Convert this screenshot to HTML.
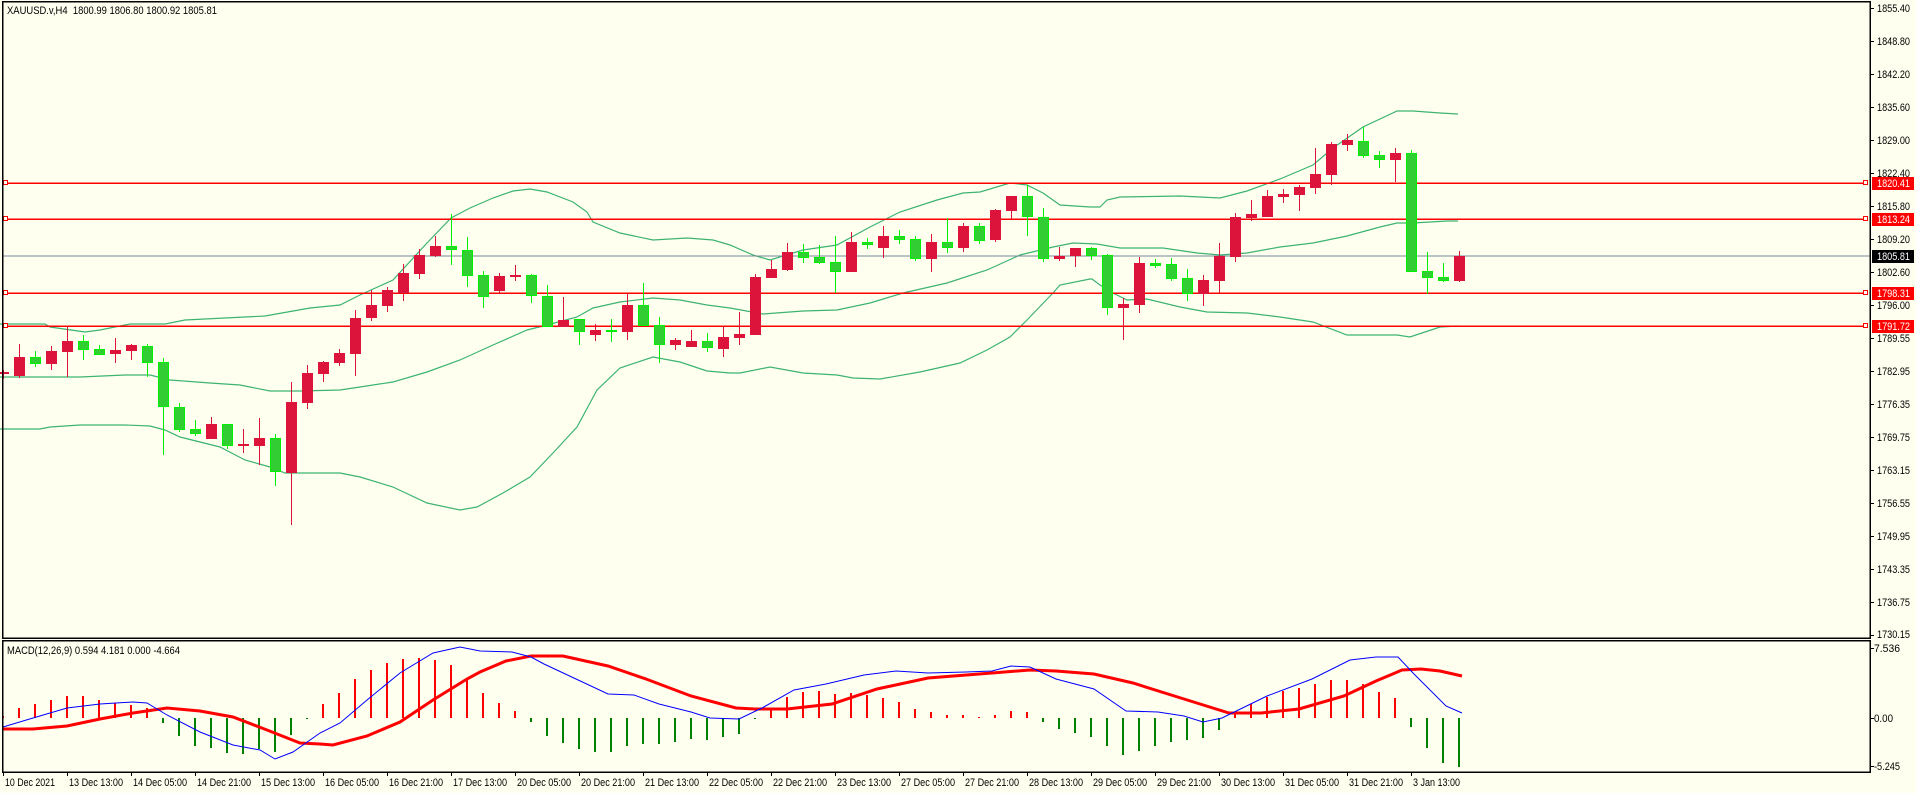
<!DOCTYPE html>
<html><head><meta charset="utf-8">
<style>
html,body{margin:0;padding:0;background:#fffff0;width:1916px;height:793px;overflow:hidden}
svg{display:block}
text{font-family:"Liberation Sans",sans-serif;font-size:11px;fill:#000}
</style></head>
<body>
<svg id="s" width="1916" height="793" viewBox="0 0 1916 793" xmlns="http://www.w3.org/2000/svg" shape-rendering="crispEdges">
<rect x="0" y="0" width="1916" height="793" fill="#fffff0"/>
<g id="bands" fill="none" stroke="#3cb371" stroke-width="1.2" shape-rendering="auto"></g>
<g id="hl"></g>
<g id="candles"></g>
<g id="macd"></g>
<rect x="2.5" y="1.5" width="1867.5" height="636.5" fill="none" stroke="#000" stroke-width="1.5"/>
<rect x="2.5" y="640.5" width="1867.5" height="131.5" fill="none" stroke="#000" stroke-width="1.5"/>
<g id="ticks" stroke="#000"></g>
<text x="7" y="14" textLength="210" lengthAdjust="spacingAndGlyphs">XAUUSD.v,H4&#160;&#160;1800.99 1806.80 1800.92 1805.81</text>
<text x="7" y="654" textLength="173" lengthAdjust="spacingAndGlyphs">MACD(12,26,9) 0.594 4.181 0.000 -4.664</text>
<g id="plabels" class="pl">
<text x="1877" y="12">1855.40</text>
<text x="1877" y="45">1848.80</text>
<text x="1877" y="78">1842.20</text>
<text x="1877" y="111">1835.60</text>
<text x="1877" y="144">1829.00</text>
<text x="1877" y="177">1822.40</text>
<text x="1877" y="210">1815.80</text>
<text x="1877" y="243">1809.20</text>
<text x="1877" y="276">1802.60</text>
<text x="1877" y="309">1796.00</text>
<text x="1877" y="342">1789.55</text>
<text x="1877" y="375">1782.95</text>
<text x="1877" y="408">1776.35</text>
<text x="1877" y="441">1769.75</text>
<text x="1877" y="474">1763.15</text>
<text x="1877" y="507">1756.55</text>
<text x="1877" y="540">1749.95</text>
<text x="1877" y="573">1743.35</text>
<text x="1877" y="606">1736.75</text>
<text x="1877" y="638">1730.15</text>
</g>
<g id="boxes">
<rect x="1872" y="177" width="42" height="13" fill="#ff0000"/>
<text x="1877" y="187" style="fill:#fff">1820.41</text>
<rect x="1872" y="213" width="42" height="13" fill="#ff0000"/>
<text x="1877" y="223" style="fill:#fff">1813.24</text>
<rect x="1872" y="250" width="42" height="13" fill="#000"/>
<text x="1877" y="260" style="fill:#fff">1805.81</text>
<rect x="1872" y="287" width="42" height="13" fill="#ff0000"/>
<text x="1877" y="297" style="fill:#fff">1798.31</text>
<rect x="1872" y="320" width="42" height="13" fill="#ff0000"/>
<text x="1877" y="330" style="fill:#fff">1791.72</text>
</g>
<text x="1874" y="652" textLength="26" lengthAdjust="spacingAndGlyphs">7.536</text>
<text x="1874" y="722" textLength="19" lengthAdjust="spacingAndGlyphs">0.00</text>
<text x="1874" y="770" textLength="26" lengthAdjust="spacingAndGlyphs">-5.245</text>
<g id="tlabels">
<text x="5" y="786">10 Dec 2021</text>
<text x="69" y="786">13 Dec 13:00</text>
<text x="133" y="786">14 Dec 05:00</text>
<text x="197" y="786">14 Dec 21:00</text>
<text x="261" y="786">15 Dec 13:00</text>
<text x="325" y="786">16 Dec 05:00</text>
<text x="389" y="786">16 Dec 21:00</text>
<text x="453" y="786">17 Dec 13:00</text>
<text x="517" y="786">20 Dec 05:00</text>
<text x="581" y="786">20 Dec 21:00</text>
<text x="645" y="786">21 Dec 13:00</text>
<text x="709" y="786">22 Dec 05:00</text>
<text x="773" y="786">22 Dec 21:00</text>
<text x="837" y="786">23 Dec 13:00</text>
<text x="901" y="786">27 Dec 05:00</text>
<text x="965" y="786">27 Dec 21:00</text>
<text x="1029" y="786">28 Dec 13:00</text>
<text x="1093" y="786">29 Dec 05:00</text>
<text x="1157" y="786">29 Dec 21:00</text>
<text x="1221" y="786">30 Dec 13:00</text>
<text x="1285" y="786">31 Dec 05:00</text>
<text x="1349" y="786">31 Dec 21:00</text>
<text x="1413" y="786">3 Jan 13:00</text>
</g>
</svg>
<script>
var NS="http://www.w3.org/2000/svg";
function el(p,t,a){var e=document.createElementNS(NS,t);for(var k in a)e.setAttribute(k,a[k]);p.appendChild(e);return e;}
function fit(sel,fn){document.querySelectorAll(sel).forEach(function(t){t.setAttribute('textLength',fn(t));t.setAttribute('lengthAdjust','spacingAndGlyphs');});}
fit('#plabels text',function(){return 33;});
fit('#boxes text',function(){return 33;});
fit('#tlabels text',function(t){var s=t.textContent;if(s=='10 Dec 2021')return 50;if(s.length<12)return 47;return 54;});
var C=[[1,372,374,370,379],[1,357,376,344,378],[0,357,364,351,367],[1,351,364,346,370],[1,341,352,327,377],[0,341,350,335,360],[0,349,355,345,355],[1,350,354,338,363],[1,345,351,344,360],[0,346,363,344,377],
[0,362,407,358,455],[0,407,430,403,432],[0,429,434,420,436],[1,424,439,417,439],[0,424,446,424,449],[1,444,446,429,453],[1,438,446,418,465],[0,438,472,434,486],[1,402,473,382,525],[1,373,403,365,409],
[1,362,374,361,382],[1,353,363,349,366],[1,318,354,310,376],[1,305,318,290,321],[1,290,306,287,312],[1,273,293,264,301],[1,255,274,249,279],[1,246,256,236,257],[0,246,250,214,265],[0,250,276,237,287],
[0,275,297,271,308],[1,276,291,273,294],[1,275,277,265,281],[0,275,296,274,303],[0,296,327,285,327],[1,320,327,297,327],[0,319,332,319,345],[1,330,335,324,341],[0,330,332,319,342],[1,305,332,294,340],
[0,305,326,283,326],[0,325,345,317,363],[1,340,345,338,350],[1,341,347,330,347],[0,341,348,333,352],[1,337,349,327,357],[1,334,338,312,345],[1,277,335,274,335],[1,269,278,260,278],[1,252,270,243,271],
[0,252,258,244,263],[0,257,263,245,264],[0,262,272,236,293],[1,242,272,232,272],[0,242,245,238,249],[1,236,248,226,258],[0,236,240,230,244],[0,239,259,236,261],[1,242,259,234,272],[0,242,248,218,253],
[1,226,248,223,252],[0,226,241,223,244],[1,210,240,209,242],[1,196,211,196,219],[0,196,217,185,236],[0,217,259,208,262],[1,256,259,247,261],[1,248,256,248,267],[0,248,256,247,260],[0,255,308,254,315],
[1,304,308,298,340],[1,263,305,257,313],[0,263,266,259,268],[0,264,279,258,281],[0,278,294,269,301],[1,280,294,275,306],[1,256,281,243,293],[1,217,257,213,262],[1,214,218,200,221],[1,196,217,190,217],
[1,194,197,189,203],[1,187,195,185,211],[1,174,188,148,194],[1,144,175,142,185],[1,140,145,134,151],[0,141,156,127,158],[0,155,160,151,168],[1,153,160,148,182],[0,153,272,150,272],[0,271,278,252,294],
[0,277,281,263,282],[1,256,281,251,282]];
var g=document.getElementById('candles');
C.forEach(function(c,k){var cx=16*k+3;var red=c[0];
 el(g,'rect',{x:cx,y:c[3],width:1,height:Math.max(1,c[4]-c[3]),fill:red?'#dc143c':'#00ee00'});
 var h=Math.max(1,c[2]-c[1]);
 if(red) el(g,'rect',{x:cx-5,y:c[1],width:11,height:h,fill:'#dc143c'});
 else {el(g,'rect',{x:cx-5,y:c[1],width:11,height:h,fill:'#00ee00'});if(h>2)el(g,'rect',{x:cx-4,y:c[1]+1,width:9,height:h-2,fill:'#32cd32'});}
});
var UP=[[0,324],[45,324],[50,327],[85,332],[100,330],[130,324],[165,324],[185,320],[225,318],[265,316],[310,308],[340,305],[360,295],[393,280],[427,243],[451,218],[470,208],[493,198],[513,191],[530,189],[547,192],[573,202],[587,212],[593,222],[620,233],[653,240],[687,238],[713,240],[730,245],[753,255],[770,260],[803,250],[837,245],[870,227],[900,212],[937,200],[963,193],[980,192],[1010,183],[1027,185],[1043,193],[1060,205],[1090,207],[1100,207],[1107,200],[1120,197],[1180,196],[1200,197],[1220,198],[1247,191],[1280,179],[1313,165],[1333,148],[1363,127],[1397,111],[1413,111],[1440,113],[1458,114]];
var MID=[[0,377],[80,377],[125,375],[150,375],[170,380],[210,383],[240,385],[270,391],[300,391],[340,390],[360,387],[393,382],[427,372],[460,360],[493,345],[527,330],[547,325],[577,317],[593,308],[620,302],[653,298],[680,300],[707,305],[730,308],[763,314],[803,311],[837,310],[870,303],[903,293],[947,283],[987,270],[1020,255],[1053,247],[1073,243],[1097,244],[1120,248],[1163,248],[1197,253],[1220,255],[1247,253],[1280,247],[1313,243],[1347,236],[1380,227],[1397,223],[1413,223],[1447,221],[1458,221]];
var LO=[[0,429],[40,429],[50,427],[80,425],[125,425],[150,426],[165,430],[180,437],[220,447],[245,460],[270,467],[285,473],[340,473],[360,477],[393,487],[427,503],[460,510],[477,507],[503,493],[530,477],[553,453],[577,427],[597,390],[620,368],[653,357],[680,362],[707,371],[730,373],[740,373],[770,367],[803,373],[837,375],[853,378],[880,379],[920,372],[960,363],[987,350],[1010,337],[1027,320],[1053,293],[1060,285],[1090,279],[1092,279],[1100,285],[1113,293],[1127,300],[1147,299],[1180,307],[1207,312],[1247,313],[1280,317],[1313,322],[1347,335],[1397,335],[1410,337],[1440,327],[1458,326]];
var bg=document.getElementById('bands');
[UP,MID,LO].forEach(function(a){el(bg,'polyline',{points:a.map(function(p){return p.join(',')}).join(' ')});});
var hl=document.getElementById('hl');
[[183,'#ff0000'],[219,'#ff0000'],[293,'#ff0000'],[326,'#ff0000']].forEach(function(l){
 el(hl,'rect',{x:3,y:l[0]-0.5,width:1864,height:1.5,fill:l[1]});
 el(hl,'rect',{x:3.5,y:l[0]-2.5,width:4,height:4,fill:'#fffff0',stroke:l[1],'stroke-width':1});
 el(hl,'rect',{x:1863.5,y:l[0]-2.5,width:4,height:4,fill:'#fffff0',stroke:l[1],'stroke-width':1});
});
el(hl,'rect',{x:3,y:255.5,width:1867,height:1.2,fill:'#778899'});
var H=[716,708,704,700,696,696,700,703,705,708,723,736,746,748,753,754,749,752,735,719,704,693,679,670,663,659,658,660,665,678,693,703,711,722,736,743,749,752,752,746,744,744,742,739,740,737,734,719,708,697,692,691,694,693,695,698,702,709,712,715,715,717,715,711,712,722,729,733,737,746,755,751,746,742,740,738,730,713,704,697,691,688,684,680,680,684,692,698,727,748,763,767];
var mg=document.getElementById('macd');
H.forEach(function(v,k){var x=16*k+2;var up=v<718;
 el(mg,'rect',{x:x,y:up?v:718,width:2,height:Math.max(1,Math.abs(v-718)),fill:up?'#ff0000':'#008000'});});
var BL=[[3,727],[33,718],[67,708],[100,704],[133,702],[147,703],[167,715],[200,732],[233,745],[260,750],[275,759],[293,752],[320,733],[340,723],[367,700],[400,673],[433,653],[460,647],[480,651],[512,652],[531,657],[544,664],[576,679],[608,694],[634,695],[659,704],[691,712],[710,718],[739,719],[762,708],[794,690],[826,684],[864,675],[896,671],[928,673],[966,672],[992,671],[1011,666],[1030,667],[1056,679],[1094,689],[1126,711],[1158,712],[1184,716],[1203,722],[1222,718],[1267,696],[1312,679],[1350,660],[1376,657],[1398,657],[1414,674],[1446,706],[1462,713]];
var RL=[[3,729],[33,729],[67,726],[100,719],[133,713],[167,708],[200,711],[233,717],[267,730],[300,743],[320,744],[333,745],[367,736],[400,722],[433,700],[467,679],[480,672],[506,661],[531,656],[563,656],[608,666],[646,679],[691,696],[736,708],[755,709],[787,709],[832,704],[877,689],[928,678],[992,673],[1030,670],[1056,671],[1094,674],[1133,683],[1184,699],[1229,713],[1261,713],[1299,709],[1344,696],[1376,681],[1402,670],[1421,669],[1440,671],[1462,676]];
el(mg,'polyline',{points:RL.map(function(p){return p.join(',')}).join(' '),fill:'none',stroke:'#ff0000','stroke-width':3,'shape-rendering':'auto'});
el(mg,'polyline',{points:BL.map(function(p){return p.join(',')}).join(' '),fill:'none',stroke:'#0000ff','stroke-width':1,'shape-rendering':'auto'});
var tk=document.getElementById('ticks');
for(var i=0;i<20;i++){var y=8+33*i;el(tk,'rect',{x:1870,y:y,width:4,height:1,fill:'#000',stroke:'none'});}
[648,718,766].forEach(function(y){el(tk,'rect',{x:1870,y:y,width:4,height:1,fill:'#000',stroke:'none'});});
for(var i=0;i<23;i++){el(tk,'rect',{x:3+64*i,y:772,width:1,height:4,fill:'#000',stroke:'none'});}
</script>
</body></html>
